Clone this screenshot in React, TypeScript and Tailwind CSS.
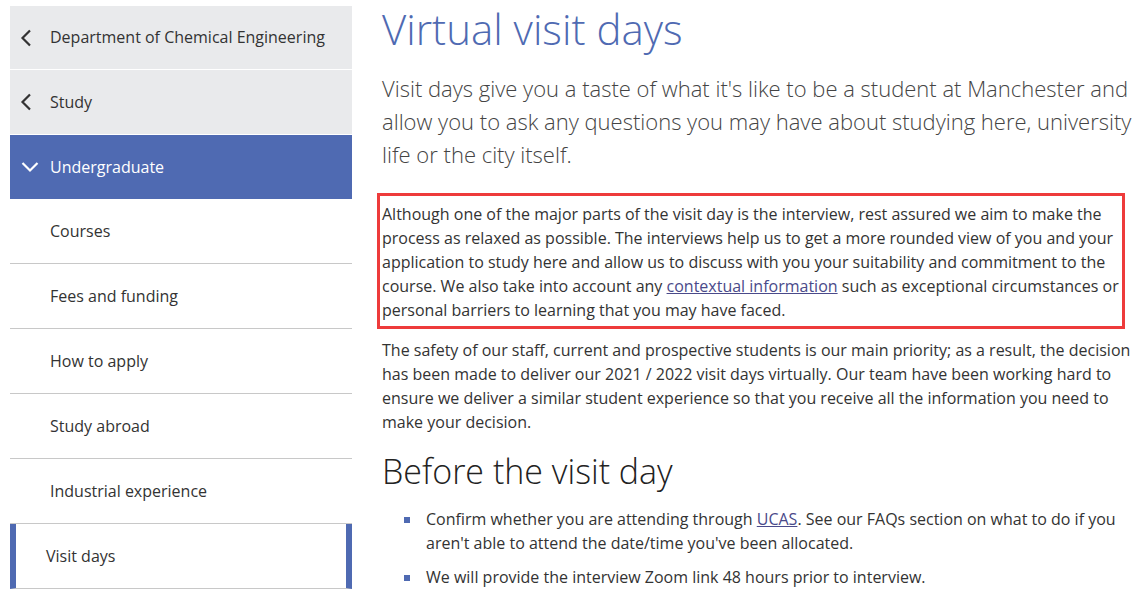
import React from "react";

const font = { fontFamily: '"Open Sans", "Liberation Sans", sans-serif' };

function ChevLeft() {
  return (
    <svg width="12" height="18" viewBox="0 0 12 18" className="shrink-0">
      <path d="M10 1.5 L2.5 9 L10 16.5" fill="none" stroke="#333" strokeWidth="2.2" />
    </svg>
  );
}
function ChevDown() {
  return (
    <svg width="18" height="12" viewBox="0 0 18 12" className="shrink-0">
      <path d="M1.5 2 L9 9.5 L16.5 2" fill="none" stroke="#fff" strokeWidth="2.2" />
    </svg>
  );
}

const subItems = ["Courses", "Fees and funding", "How to apply", "Study abroad", "Industrial experience"];

export default function App() {
  return (
    <div className="flex bg-white w-[1142px] h-[597px] overflow-hidden text-[#333]" style={font}>
      <nav className="ml-[10px] mt-[6px] w-[342px] shrink-0 flex flex-col">
        <div className="h-[64px] bg-[#e9eaec] flex items-center pl-[10px] gap-[18px] text-[16px] text-[#333] border-b border-white">
          <ChevLeft />
          <span className="-mt-[2px]">Department of Chemical Engineering</span>
        </div>
        <div className="h-[65px] bg-[#e9eaec] flex items-center pl-[10px] gap-[18px] text-[16px] text-[#333] border-b border-white">
          <ChevLeft />
          <span>Study</span>
        </div>
        <div className="h-[64px] bg-[#4f6ab2] flex items-center pl-[11px] gap-[11px] text-[16px] text-white">
          <ChevDown />
          <span>Undergraduate</span>
        </div>
        {subItems.map((s) => (
          <div key={s} className="h-[65px] flex items-center pl-[40px] text-[16px] text-[#333] border-b border-[#c8c8c8]">
            {s}
          </div>
        ))}
        <div className="h-[65px] flex items-center pl-[30px] text-[16px] text-[#333] border-b border-[#c8c8c8] border-l-[6px] border-r-[6px] border-l-[#4f6ab2] border-r-[#4f6ab2]">
          Visit days
        </div>
      </nav>
      <main className="ml-[30px] w-[752px] shrink-0">
        <h1 className="text-[42px] font-light leading-[1.2] text-[#4f6ab2] mt-[4px]">Virtual visit days</h1>
        <p className="text-[22px] font-light leading-[33px] text-[#444] mt-[18px]">
          Visit days give you a taste of what it's like to be a student at Manchester and allow you to ask any questions you may have about studying here, university life or the city itself.
        </p>
        <div className="mt-[22px] -ml-[5px] w-[748px] border-[3px] border-[#ee3b3b] pl-[2px] pr-[2px] pt-[6px] pb-[4px]">
          <p className="text-[16px] leading-[24px] text-[#333]">
            Although one of the major parts of the visit day is the interview, rest assured we aim to make the process as relaxed as possible. The interviews help us to get a more rounded view of you and your application to study here and allow us to discuss with you your suitability and commitment to the course. We also take into account any{" "}
            <a className="underline text-[#4a4a8a] decoration-[#4a4a8a]">contextual information</a> such as exceptional circumstances or personal barriers to learning that you may have faced.
          </p>
        </div>
        <p className="text-[16px] leading-[24px] text-[#333] mt-[9px]">
          The safety of our staff, current and prospective students is our main priority; as a result, the decision has been made to deliver our 2021 / 2022 visit days virtually. Our team have been working hard to ensure we deliver a similar student experience so that you receive all the information you need to make your decision.
        </p>
        <h2 className="text-[34px] font-light leading-[1.3] text-[#222] mt-[15px]">Before the visit day</h2>
        <ul className="mt-[13px] pl-[22px] flex flex-col gap-[10px]">
          <li className="flex text-[16px] leading-[24px] text-[#333]">
            <span className="w-[6px] h-[6px] bg-[#4f6ab2] mt-[10px] mr-[16px] shrink-0" />
            <span>
              Confirm whether you are attending through <a className="underline text-[#4a4a8a]">UCAS</a>. See our FAQs section on what to do if you aren't able to attend the date/time you've been allocated.
            </span>
          </li>
          <li className="flex text-[16px] leading-[24px] text-[#333]">
            <span className="w-[6px] h-[6px] bg-[#4f6ab2] mt-[10px] mr-[16px] shrink-0" />
            <span>We will provide the interview Zoom link 48 hours prior to interview.</span>
          </li>
        </ul>
      </main>
    </div>
  );
}
